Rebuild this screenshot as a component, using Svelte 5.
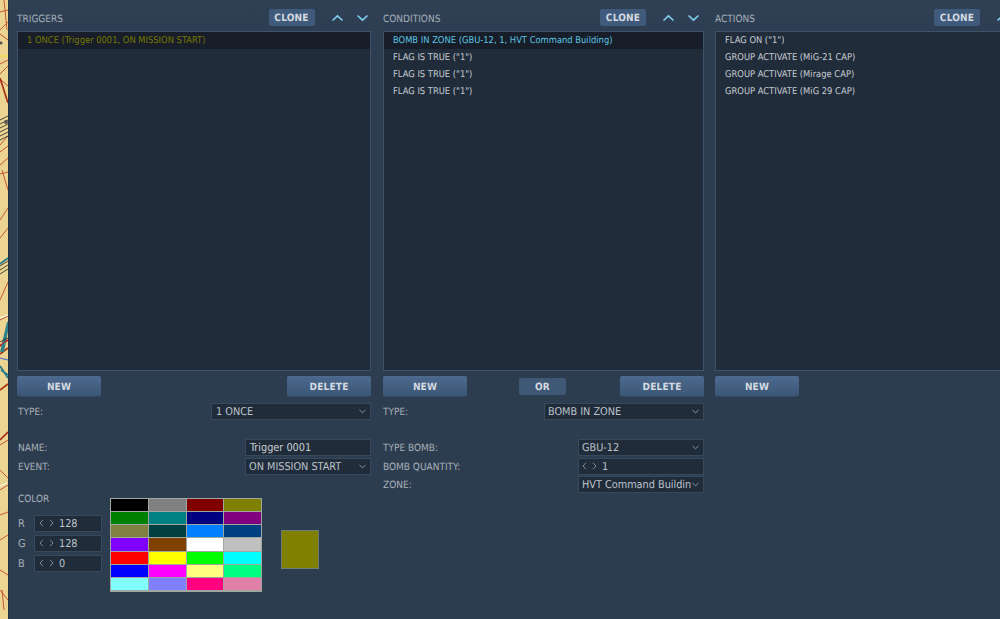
<script>
  const swatches = [
    '#000000','#808080','#800000','#808000',
    '#008000','#008080','#000080','#800080',
    '#808040','#004040','#0080ff','#004080',
    '#8000ff','#804000','#ffffff','#c0c0c0',
    '#ff0000','#ffff00','#00ff00','#00ffff',
    '#0000ff','#ff00ff','#ffff80','#00ff80',
    '#80ffff','#8080ff','#ff0080','#e080a8'
  ];
  const rgb = [['R','128'],['G','128'],['B','0']];
</script>

{#snippet head(title)}
  <div class="head">
    <span class="title">{title}</span>
    <button class="btn clone">CLONE</button>
    <div class="arrows">
      <svg width="13" height="8" viewBox="0 0 13 8"><path d="M1.5 6.5 6.5 1.8 11.5 6.5" /></svg>
      <svg width="13" height="8" viewBox="0 0 13 8"><path d="M1.5 1.5 6.5 6.2 11.5 1.5" /></svg>
    </div>
  </div>
{/snippet}

{#snippet chevron()}
  <svg class="chev" width="7" height="5" viewBox="0 0 7 5"><path d="M.5 1 3.5 3.8 6.5 1" /></svg>
{/snippet}

{#snippet stepper(value)}
  <svg class="step" width="5" height="8" viewBox="0 0 5 8"><path d="M4 .8 1 4 4 7.2" /></svg>
  <svg class="step" width="5" height="8" viewBox="0 0 5 8"><path d="M1 .8 4 4 1 7.2" /></svg>
  <span class="val">{value}</span>
{/snippet}

<div class="page">
  <svg class="map" width="8" height="619" viewBox="0 0 8 619">
    <rect width="8" height="619" fill="#ecd593" />
    <g fill="none" stroke="#c0492c" stroke-width=".9">
      <path d="M0 12 8 10M0 30 8 22M0 34 8 40M4 0 7 30M0 64 8 60M0 74 8 66M1 80 8 86M0 145 8 136M0 152 8 146M0 165 8 158M0 174 8 172M0 220 8 208M0 238 8 228M2 170 8 190M0 300 8 282M0 320 8 316M0 445 8 440M0 515 8 512M0 540 8 535M0 570 8 575M0 590 8 600M2 590 4 610M0 470 8 478M0 490 8 485" />
    </g>
    <g fill="none" stroke="#a83018" stroke-width="1.7">
      <path d="M0 78 8 103M0 346 8 340M0 354 8 348M0 390 8 384M0 440 8 432" />
    </g>
    <g fill="none" stroke="#2f8088" stroke-width="2">
      <path d="M0 264 8 258M1 352 8 322M3 352 8 326M0 366 8 378M1 370 8 375" />
    </g>
    <g fill="none" stroke="#222" stroke-width=".8">
      <path d="M0 120 8 116M0 124 8 120M0 128 8 124M0 132 8 128M0 136 8 132M0 140 8 136M0 266 8 261M0 270 8 265M0 274 8 269M0 342 8 338" />
    </g>
    <path d="M0 56 8 56" stroke="#f4e320" stroke-width=".9" />
    <path d="M0 358 8 360" stroke="#2a50d8" stroke-width=".9" />
    <path d="M0 345 8 340" stroke="#e02020" stroke-width=".9" />
    <path d="M0 318 8 315" stroke="#fff" stroke-width=".9" />
    <path d="M0 486 7 483" stroke="#fff" stroke-width=".9" />
    <circle cx="1" cy="43" r="1.6" fill="#555" />
    <circle cx="6" cy="122" r="2" fill="#555" />
  </svg>

  <main class="main">
    <section class="col c1">
      {@render head('TRIGGERS')}
      <div class="list">
        <div class="item sel olive">1 ONCE (Trigger 0001, ON MISSION START)</div>
      </div>
      <div class="actions">
        <button class="btn big">NEW</button>
        <button class="btn big">DELETE</button>
      </div>
      <div class="row type"><span>TYPE:</span><div class="field w160"><span>1 ONCE</span>{@render chevron()}</div></div>
      <div class="fields">
        <div class="row"><span>NAME:</span><div class="field w126 input"><span>Trigger 0001</span></div></div>
        <div class="row"><span>EVENT:</span><div class="field w126"><span>ON MISSION START</span>{@render chevron()}</div></div>
      </div>
      <div class="color">
        <div class="rgb">
          <div class="color-label">COLOR</div>
          {#each rgb as [ch, v]}
            <div class="rgb-row"><span class="ch">{ch}</span><div class="field spin">{@render stepper(v)}</div></div>
          {/each}
        </div>
        <div class="swatches">
          {#each swatches as c}<i style="background:{c}"></i>{/each}
        </div>
        <div class="preview"></div>
      </div>
    </section>

    <section class="col c2">
      {@render head('CONDITIONS')}
      <div class="list">
        <div class="item sel cyan">BOMB IN ZONE (GBU-12, 1, HVT Command Building)</div>
        <div class="item">FLAG IS TRUE ("1")</div>
        <div class="item">FLAG IS TRUE ("1")</div>
        <div class="item">FLAG IS TRUE ("1")</div>
      </div>
      <div class="actions">
        <button class="btn big">NEW</button>
        <button class="btn or">OR</button>
        <button class="btn big">DELETE</button>
      </div>
      <div class="row type"><span>TYPE:</span><div class="field w160"><span>BOMB IN ZONE</span>{@render chevron()}</div></div>
      <div class="fields">
        <div class="row"><span>TYPE BOMB:</span><div class="field w126"><span>GBU-12</span>{@render chevron()}</div></div>
        <div class="row"><span>BOMB QUANTITY:</span><div class="field w126 qty">{@render stepper('1')}</div></div>
        <div class="row"><span>ZONE:</span><div class="field w126"><span>HVT Command Buildin</span>{@render chevron()}</div></div>
      </div>
    </section>

    <section class="col c3">
      {@render head('ACTIONS')}
      <div class="list">
        <div class="item">FLAG ON ("1")</div>
        <div class="item">GROUP ACTIVATE (MiG-21 CAP)</div>
        <div class="item">GROUP ACTIVATE (Mirage CAP)</div>
        <div class="item">GROUP ACTIVATE (MiG 29 CAP)</div>
      </div>
      <div class="actions">
        <button class="btn big">NEW</button>
      </div>
    </section>
  </main>
</div>

<style>
  :global(body) { margin: 0; background: #2d3d50; }
  .page {
    display: flex;
    width: 1000px;
    height: 619px;
    overflow: hidden;
    font-family: "DejaVu Sans Condensed", "DejaVu Sans", sans-serif;
    font-stretch: condensed;
    font-size: 10px;
    color: #b4bcc4;
    text-rendering: geometricPrecision;
  }
  .map { flex: none; display: block; }
  .main {
    flex: none;
    display: flex;
    gap: 12px;
    width: 992px;
    box-sizing: border-box;
    padding: 9px 0 0 8px;
    background: linear-gradient(#2f4055, #2d3d50 60px);
    border-left: 1px solid #22303f;
  }
  .col { flex: none; display: flex; flex-direction: column; }
  .c1 { width: 354px; }
  .c2 { width: 321px; }
  .c3 { width: 323px; margin-left: -1px; }

  .head { display: flex; align-items: center; height: 17px; margin-bottom: 5px; }
  .c2 .head, .c3 .head { padding-right: 1.5px; }
  .title { flex: 1; padding-top: 3px; color: #a4aeb8; }
  .arrows { display: flex; justify-content: space-between; width: 38px; margin: 0 2.5px 0 16px; flex: none; }
  .arrows path { fill: none; stroke: #7fd0ee; stroke-width: 1.6; }

  .btn {
    border: 0;
    padding: 2px 0 0;
    font: bold 10px "DejaVu Sans Condensed", "DejaVu Sans", sans-serif;
    font-stretch: condensed;
    text-rendering: geometricPrecision;
    color: #d4dae0;
    letter-spacing: .2px;
    border-radius: 2px;
    background: #3f5a7a;
  }
  .clone { width: 46px; height: 17px; flex: none; }
  .big {
    width: 84px;
    height: 21px;
    background: linear-gradient(#4c6a8e, #3c5676);
    border-bottom: 1px solid #34485f;
  }
  .or { width: 47px; height: 17px; align-self: center; background: #3e5876; margin-left: -2px; }

  .list {
    box-sizing: border-box;
    height: 340px;
    background: #212c3b;
    border: 1px solid #3f5368;
  }
  .item {
    height: 17px;
    line-height: 18px;
    padding-left: 9px;
    font-size: 9.3px;
    color: #c6ccd2;
    white-space: nowrap;
  }
  .sel { background: #171e29; }
  .olive { color: #787800; }
  .cyan { color: #5cc6e4; }

  .actions { display: flex; justify-content: space-between; margin-top: 5px; height: 21px; }
  .row { display: flex; justify-content: space-between; align-items: center; height: 17px; padding-left: 1px; color: #a8b0b8; }
  .row > span { padding-top: 2px; }
  .c2 .row { padding-left: 0; }
  .row + .row { margin-top: 1.5px; }
  .type { margin-top: 6px; }
  .fields { margin-top: 19px; display: flex; flex-direction: column; }

  .field {
    display: flex;
    align-items: center;
    box-sizing: border-box;
    height: 17px;
    padding: 0 4px;
    font-size: 10.8px;
    color: #bcc3ca;
    background: #212c3b;
    border: 1px solid #37495d;
    overflow: hidden;
    white-space: nowrap;
  }
  .w160 { width: 160px; }
  .w126 { width: 126px; padding-left: 3px; }
  .input { padding-left: 4px; }
  .input span { color: #c8ced4; }
  .c2 .w160 { padding-left: 3px; }
  .chev { margin-left: auto; flex: none; }
  .chev path { fill: none; stroke: #98a2ac; stroke-width: .9; }
  .step { flex: none; margin-right: 5px; }
  .step path { fill: none; stroke: #8c96a0; stroke-width: .9; }
  .qty { padding-left: 3px; }

  .color { display: flex; margin-top: 18px; }
  .rgb { width: 93px; flex: none; }
  .color-label { height: 12px; line-height: 14px; margin-bottom: 10px; padding-left: 1px; color: #a8b0b8; }
  .rgb-row { display: flex; align-items: center; height: 17px; margin-bottom: 3px; padding-left: 1px; font-size: 10.8px; color: #a8b0b8; }
  .ch { width: 16px; flex: none; }
  .spin { width: 68px; }
  .swatches {
    flex: none;
    display: grid;
    grid-template-columns: repeat(4, 1fr);
    grid-template-rows: repeat(7, 1fr);
    gap: 1px;
    width: 152px;
    height: 94px;
    margin-top: 5px;
    padding: 1px;
    box-sizing: border-box;
    background: #9fa7a0;
  }
  .swatches i { display: block; }
  .preview {
    flex: none;
    box-sizing: border-box;
    width: 38px;
    height: 39px;
    margin: 37px 0 0 19px;
    background: #808000;
    border: 1px solid #6f7c78;
  }
</style>
